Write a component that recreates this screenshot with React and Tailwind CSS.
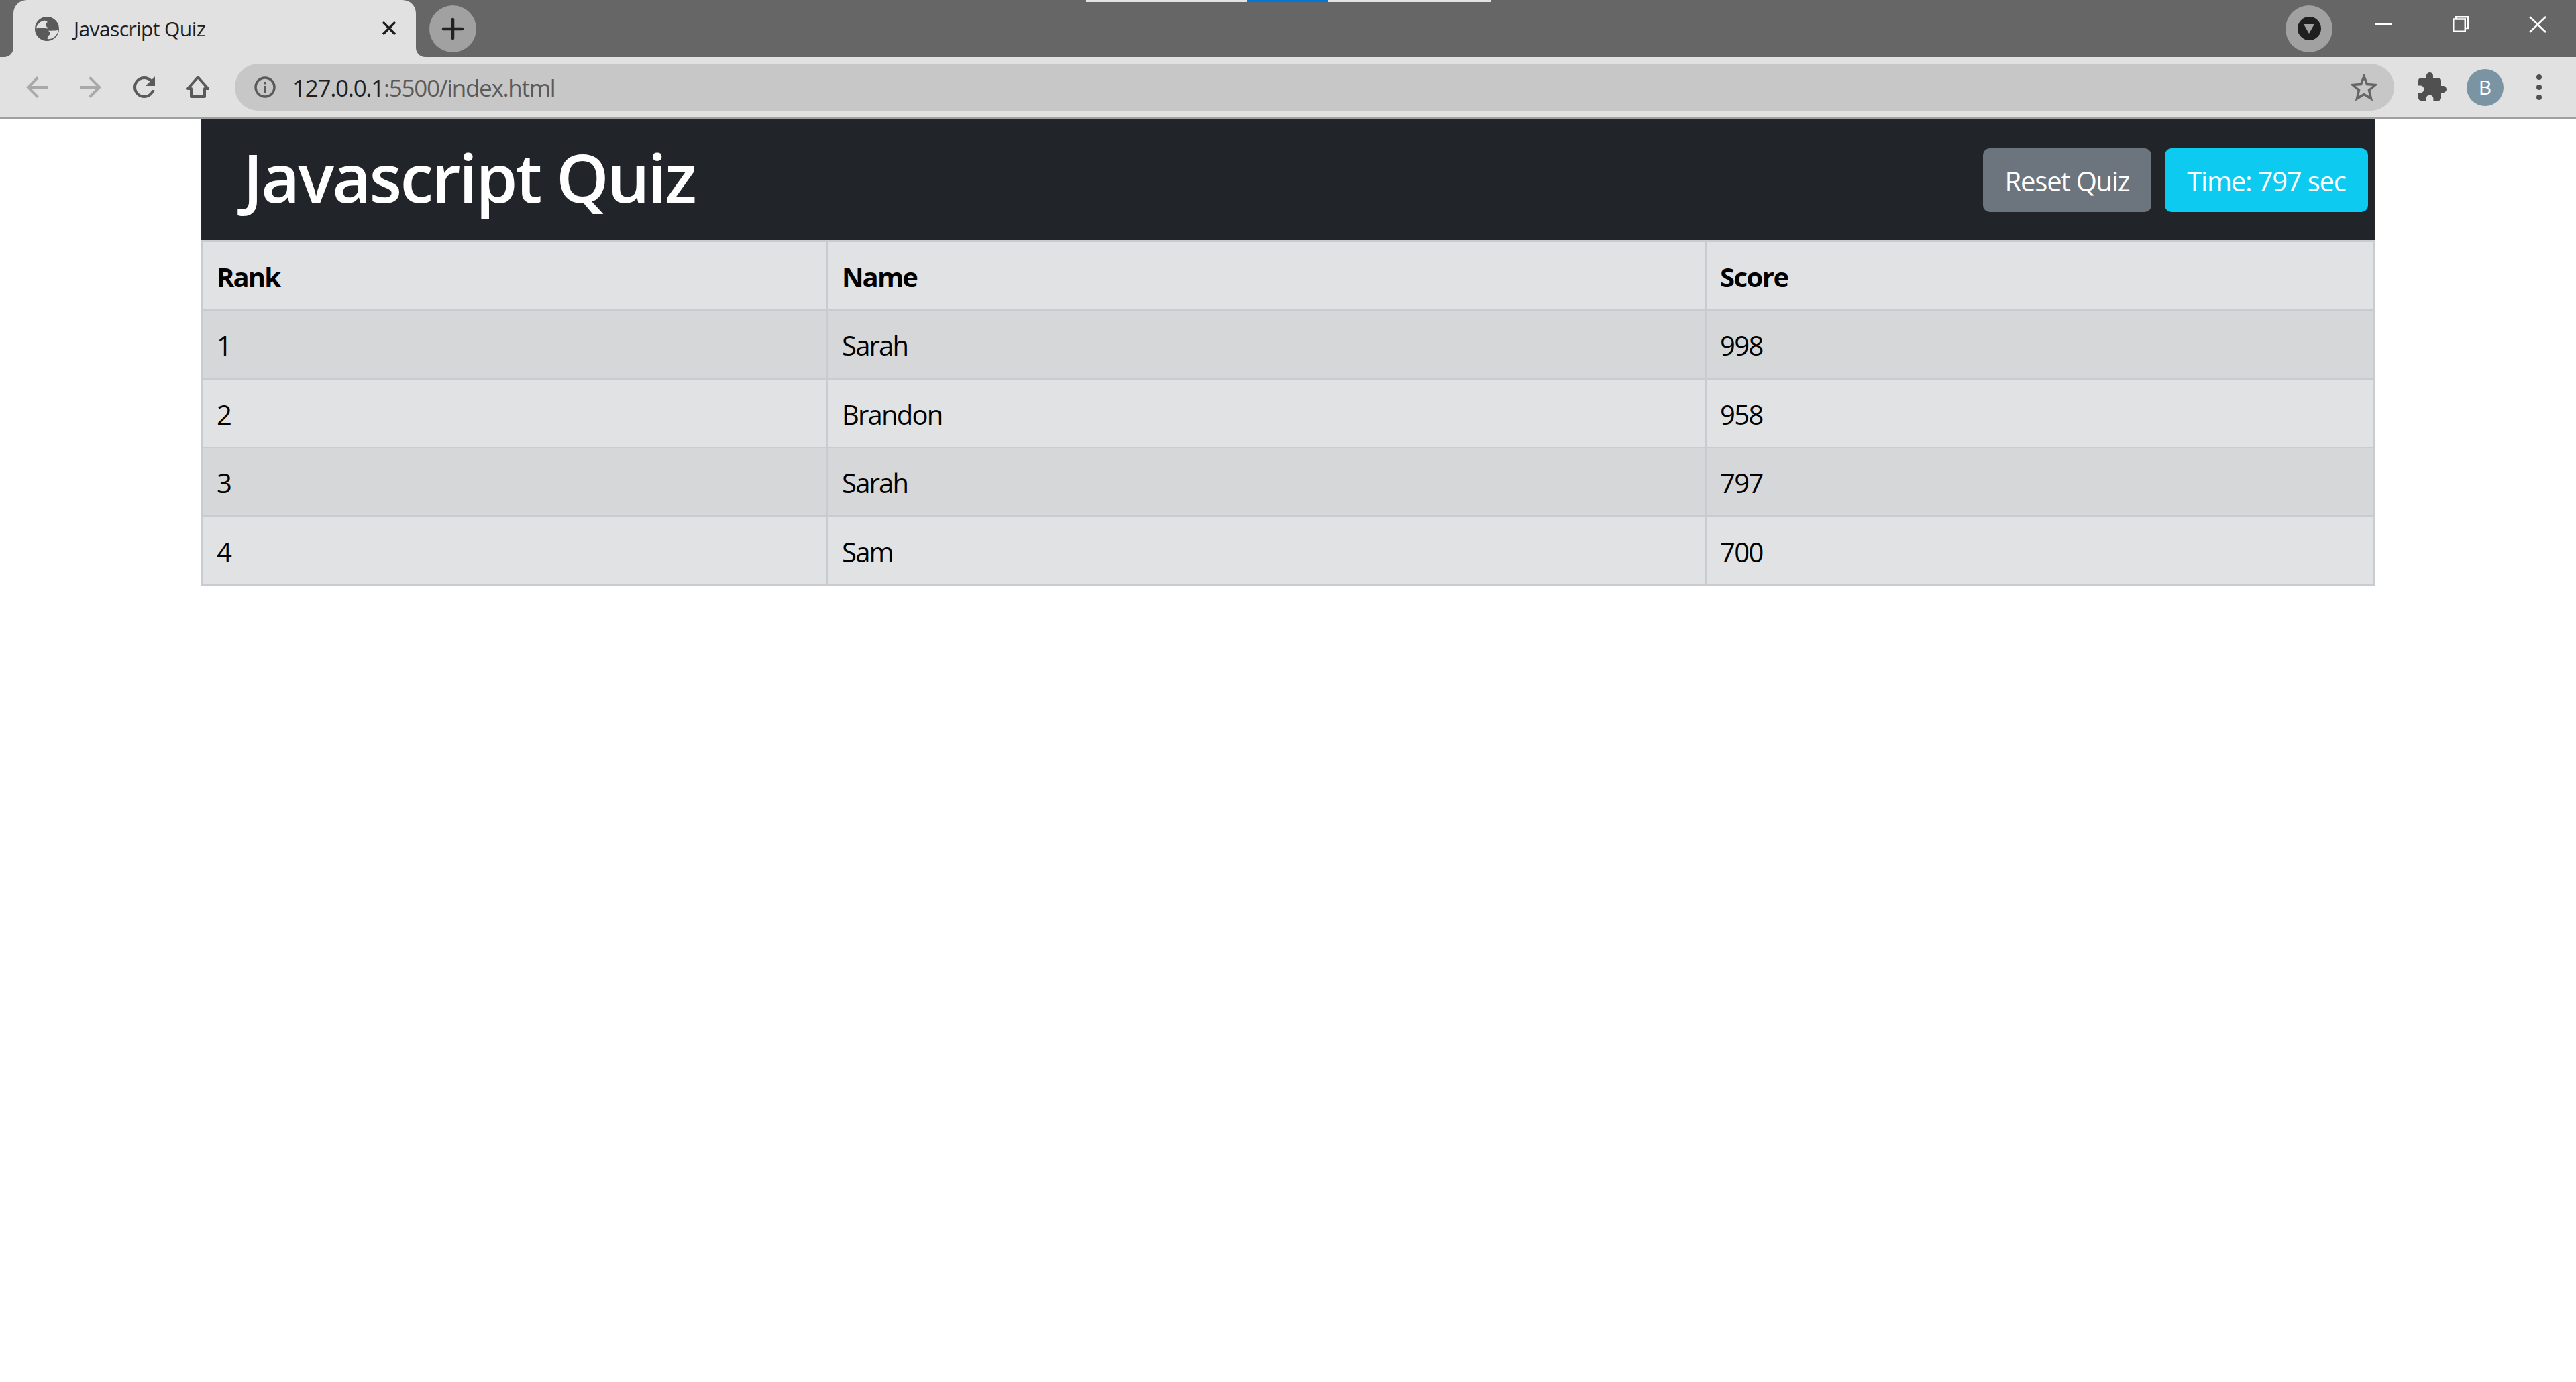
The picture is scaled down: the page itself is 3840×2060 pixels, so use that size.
const rows = [
  { rank: "1", name: "Sarah", score: "998", bg: "bg-[#d6d7d9]", h: "h-[103px]", b: "border-b-[3px]" },
  { rank: "2", name: "Brandon", score: "958", bg: "bg-[#e1e2e4]", h: "h-[102px]", b: "border-b-[2px]" },
  { rank: "3", name: "Sarah", score: "797", bg: "bg-[#d6d7d9]", h: "h-[103px]", b: "border-b-[3px]" },
  { rank: "4", name: "Sam", score: "700", bg: "bg-[#e1e2e4]", h: "h-[102px]", b: "border-b-[2px]" },
];

function Ic({ size = 48, color = "#5a5a5a", children, vb = "0 0 24 24" }) {
  return (
    <svg width={size} height={size} viewBox={vb} fill={color} className="shrink-0">
      {children}
    </svg>
  );
}

function Globe() {
  return (
    <svg width="36" height="36" viewBox="0 0 36 36" className="shrink-0">
      <circle cx="18" cy="18" r="18" fill="#5a5a5a" />
      <path d="M2.500 15C4 11 8 7 14 5.500c2 .5 4 1.500 5 2.500-2 1-3.500 2.500-3 4.500.5 2 3 3 4 5-4 0-7-1-10-1-3 0-5 0-7.500 1z" fill="#e1e1e1" />
      <path d="M35 19.500c-.5 5-4 10-9 12.500-2 .8-5 1.500-7 1-1-1-.5-3 1.500-5 2-1.500 3-3.500 1.500-5-1-1-2-2-1.500-2.500 4 .5 6 0 9 0 2 0 4-.5 5.500-1z" fill="#e1e1e1" />
    </svg>
  );
}

function WinButton({ children, className }) {
  return <div className={`flex items-center justify-center ${className}`}>{children}</div>;
}

export default function App() {
  return (
    <div className="min-h-[2060px] bg-white font-['Open_Sans',sans-serif] text-black">
      {/* browser chrome */}
      <div className="relative">
        <div className="absolute left-[1619px] top-0 flex h-[3px] w-[603px]">
          <div className="w-[240px] bg-[#e3e3e3]" />
          <div className="w-[120px] bg-[#0078d7]" />
          <div className="flex-1 bg-[#e3e3e3]" />
        </div>

        <div className="flex h-[85px] bg-[#e1e1e1]">
          <div className="w-[20px] rounded-br-[14px] bg-[#666666]" />
          <div className="w-[600px] bg-[#666666]">
            <div className="flex h-full items-center rounded-t-[20px] bg-[#e1e1e1] pl-[32px] pr-[28px]">
              <Globe />
              <span className="ml-[22px] flex-1 text-[30px] leading-none tracking-[-0.6px] text-[#1f1f1f]">Javascript Quiz</span>
              <svg width="24" height="24" viewBox="0 0 24 24" className="mb-[1px] shrink-0">
                <path d="M3 3 L21 21 M21 3 L3 21" stroke="#1c1c1c" strokeWidth="3.500" />
              </svg>
            </div>
          </div>
          <div className="flex flex-1 items-center rounded-bl-[14px] bg-[#666666] pl-[20px]">
            <div className="flex h-[70px] w-[70px] items-center justify-center rounded-full bg-[#a1a1a1]">
              <svg width="34" height="34" viewBox="0 0 34 34">
                <path d="M17 3 V31 M3 17 H31" stroke="#222222" strokeWidth="4.500" strokeLinecap="round" />
              </svg>
            </div>
            <div className="ml-auto flex h-[70px] w-[70px] items-center justify-center rounded-full bg-[#a1a1a1]">
              <div className="flex h-[35px] w-[35px] items-center justify-center rounded-full bg-[#1f1f1f]">
                <svg width="16" height="14" viewBox="0 0 16 14">
                  <path d="M0 0 H16 L8 14 Z" fill="#a1a1a1" />
                </svg>
              </div>
            </div>
            <div className="ml-[18px] flex h-full items-start">
              <WinButton className="h-[72px] w-[115px]">
                <svg width="25" height="3"><rect width="25" height="3" fill="#ffffff" /></svg>
              </WinButton>
              <WinButton className="h-[72px] w-[115px]">
                <svg width="24" height="24" viewBox="0 0 24 24" fill="none" stroke="#ffffff" strokeWidth="2.500">
                  <path d="M5 4 V1.250 H22.750 V18 H19" />
                  <rect x="1.250" y="4.500" width="17.500" height="18.250" />
                </svg>
              </WinButton>
              <WinButton className="h-[72px] w-[115px]">
                <svg width="26" height="25" viewBox="0 0 26 25">
                  <path d="M1 1 L25 24 M25 1 L1 24" stroke="#ffffff" strokeWidth="2.500" />
                </svg>
              </WinButton>
            </div>
          </div>
        </div>

        <div className="flex h-[93px] items-center border-b-[3px] border-[#a0a0a0] bg-[#e1e1e1] pl-[31px]">
          <div className="flex w-[319px] shrink-0 items-center gap-[32px]">
            <Ic color="#a9a9a9"><path d="M20 11H7.830l5.590-5.590L12 4l-8 8 8 8 1.410-1.410L7.830 13H20v-2z" /></Ic>
            <Ic color="#a9a9a9"><path d="M12 4l-1.410 1.410L16.170 11H4v2h12.170l-5.580 5.590L12 20l8-8z" /></Ic>
            <Ic><path d="M17.650 6.350C16.200 4.900 14.210 4 12 4c-4.420 0-7.990 3.580-7.990 8s3.570 8 7.990 8c3.730 0 6.840-2.550 7.730-6h-2.080c-.820 2.330-3.040 4-5.650 4-3.310 0-6-2.690-6-6s2.690-6 6-6c1.660 0 3.140.690 4.220 1.780L13 11h7V4l-2.350 2.350z" /></Ic>
            <svg width="48" height="48" viewBox="0 0 48 48" fill="none" className="shrink-0">
              <path d="M9 26 L24 9 L39 26 H34 V38 H14 V26 Z" stroke="#5a5a5a" strokeWidth="4" strokeLinejoin="round" />
            </svg>
          </div>
          <div className="flex h-[70px] w-[3219px] shrink-0 items-center rounded-full bg-[#c7c7c7] pl-[29px] pr-[25px]">
            <svg width="32" height="32" viewBox="0 0 32 32" className="shrink-0">
              <circle cx="16" cy="16" r="14" fill="none" stroke="#5a5a5a" strokeWidth="3.500" />
              <rect x="14.500" y="14" width="3" height="10" fill="#5a5a5a" />
              <rect x="14.500" y="8" width="3" height="3.500" fill="#5a5a5a" />
            </svg>
            <span className="ml-[25px] flex-1 text-[35px] leading-none tracking-[-1.3px] text-[#5a5a5a]">
              <span className="text-[#1f1f1f]">127.0.0.1</span>:5500/index.html
            </span>
            <svg width="40" height="40" viewBox="0 0 40 40" fill="none" className="shrink-0">
              <path d="M20 4 L24.500 15.500 L37 16.500 L27.500 24.500 L30.500 37 L20 30.500 L9.500 37 L12.500 24.500 L3 16.500 L15.500 15.500 Z" stroke="#666666" strokeWidth="3.500" />
            </svg>
          </div>
          <div className="ml-[32px]">
            <Ic size="48" color="#505050"><path d="M20.500 11H19V7c0-1.100-.9-2-2-2h-4V3.500C13 2.120 11.880 1 10.500 1S8 2.120 8 3.500V5H4c-1.100 0-1.990.9-1.990 2v3.800H3.500c1.490 0 2.700 1.210 2.700 2.700s-1.210 2.700-2.700 2.700H2V20c0 1.100.9 2 2 2h3.800v-1.500c0-1.490 1.210-2.700 2.700-2.700 1.490 0 2.700 1.210 2.700 2.700V22H17c1.100 0 2-.9 2-2v-4h1.500c1.380 0 2.500-1.120 2.500-2.500S21.880 11 20.500 11z" /></Ic>
          </div>
          <div className="ml-[28px] flex h-[55px] w-[55px] items-center justify-center rounded-full bg-[#7a94a3] text-[30px] leading-none text-white">B</div>
          <div className="ml-[49px] flex flex-col gap-[7px]">
            <div className="h-[8px] w-[8px] rounded-full bg-[#505050]" />
            <div className="h-[8px] w-[8px] rounded-full bg-[#505050]" />
            <div className="h-[8px] w-[8px] rounded-full bg-[#505050]" />
          </div>
        </div>
      </div>

      {/* page */}
      <div className="mx-[300px]">
        <div className="flex h-[180px] items-center justify-between bg-[#212529] pl-[62px] pr-[10px]">
          <h1 className="pb-[10px] text-[100px] font-semibold leading-[120px] tracking-[-2.7px] text-white">Javascript Quiz</h1>
          <div className="flex gap-[20px]">
            <div className="flex h-[95px] w-[251px] items-center justify-center rounded-[10px] bg-[#6c757d] pt-[3px] text-[40px] tracking-[-1.2px] text-white">Reset Quiz</div>
            <div className="flex h-[95px] w-[303px] items-center justify-center rounded-[10px] bg-[#0dcaf0] pt-[3px] text-[40px] tracking-[-1.2px] text-white">Time: 797 sec</div>
          </div>
        </div>
        <table className="w-[3240px] table-fixed border-separate border-spacing-0 border-l-[3px] border-t-[3px] border-[#c8cbcf] text-[40px]">
          <colgroup>
            <col className="w-[932px]" />
            <col className="w-[1309px]" />
            <col className="w-[996px]" />
          </colgroup>
          <thead>
            <tr className="h-[102px] bg-[#e1e2e4]">
              <th className="border-b-[2px] border-r-[3px] border-[#c8cbcf] pl-[20px] pt-[3px] text-left font-bold tracking-[-1.9px]">Rank</th>
              <th className="border-b-[2px] border-r-[2px] border-[#c8cbcf] pl-[20px] pt-[3px] text-left font-bold tracking-[-1.9px]">Name</th>
              <th className="border-b-[2px] border-r-[2px] border-[#c8cbcf] pl-[20px] pt-[3px] text-left font-bold tracking-[-1.5px]">Score</th>
            </tr>
          </thead>
          <tbody>
            {rows.map((r) => (
              <tr key={r.rank} className={`${r.h} ${r.bg}`}>
                <td className={`${r.b} border-r-[3px] border-[#c8cbcf] pl-[20px] pt-[3px] tracking-[-1.6px]`}>{r.rank}</td>
                <td className={`${r.b} border-r-[2px] border-[#c8cbcf] pl-[20px] pt-[3px] tracking-[-1.8px]`}>{r.name}</td>
                <td className={`${r.b} border-r-[2px] border-[#c8cbcf] pl-[20px] pt-[3px] tracking-[-1.6px]`}>{r.score}</td>
              </tr>
            ))}
          </tbody>
        </table>
      </div>
    </div>
  );
}
